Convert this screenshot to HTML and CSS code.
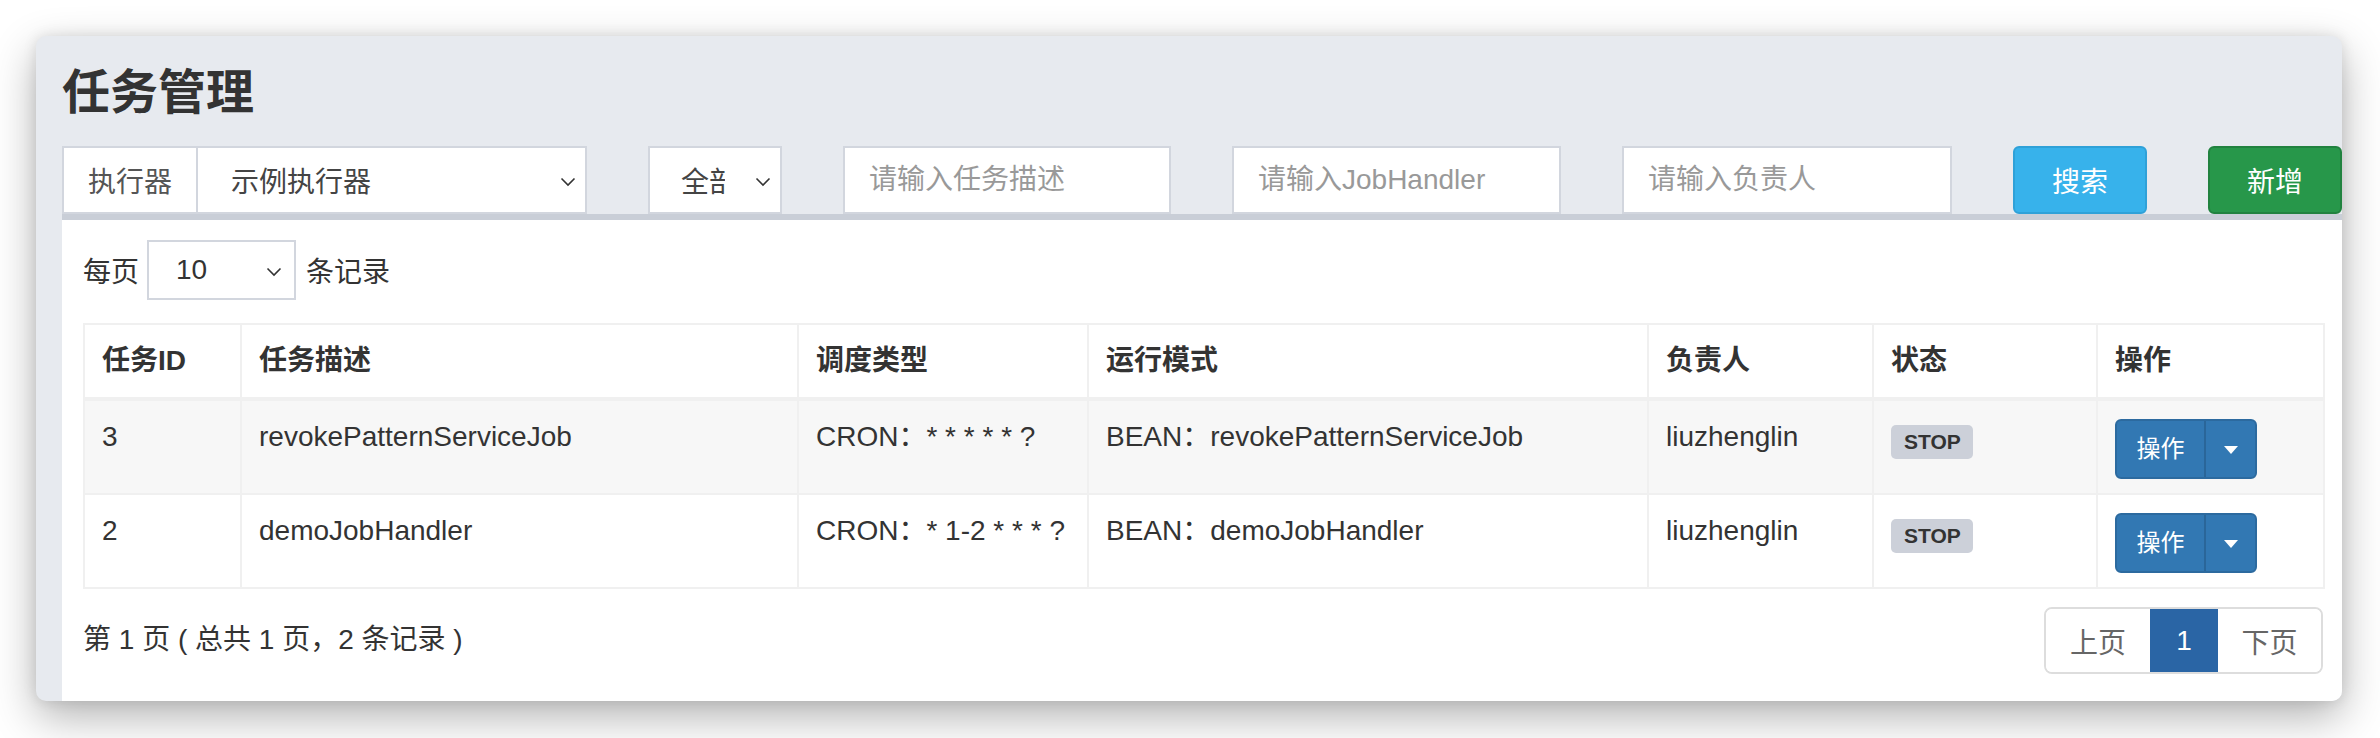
FILE: index.html
```html
<!DOCTYPE html>
<html lang="zh-CN">
<head>
<meta charset="utf-8">
<title>任务管理</title>
<link rel="stylesheet" href="styles.css">
</head>
<body>
<div class="window">
  <section class="content-header">
    <h1>任务管理</h1>
  </section>

  <div class="filters">
    <div class="input-group w-exec">
      <span class="addon">执行器</span>
      <div class="select grow">
        <span class="val">示例执行器</span>
        <svg class="chev" width="16" height="10" viewBox="0 0 16 10"><path d="M1.5 1.5 L8 8 L14.5 1.5" fill="none" stroke="#333" stroke-width="1.6"/></svg>
      </div>
    </div>
    <div class="select w-status">
      <span class="val clip">全部</span>
      <svg class="chev" width="16" height="10" viewBox="0 0 16 10"><path d="M1.5 1.5 L8 8 L14.5 1.5" fill="none" stroke="#333" stroke-width="1.6"/></svg>
    </div>
    <input class="input w-desc" type="text" placeholder="请输入任务描述">
    <input class="input w-handler" type="text" placeholder="请输入JobHandler">
    <input class="input w-author" type="text" placeholder="请输入负责人">
    <button class="btn btn-search" type="button">搜索</button>
    <button class="btn btn-add" type="button">新增</button>
  </div>

  <div class="box">
    <div class="length">
      <span>每页</span>
      <div class="select sm">
        <span class="val">10</span>
        <svg class="chev" width="16" height="10" viewBox="0 0 16 10"><path d="M1.5 1.5 L8 8 L14.5 1.5" fill="none" stroke="#333" stroke-width="1.6"/></svg>
      </div>
      <span>条记录</span>
    </div>

    <table class="grid">
      <colgroup>
        <col class="c1"><col class="c2"><col class="c3"><col class="c4"><col class="c5"><col class="c6"><col class="c7">
      </colgroup>
      <thead>
        <tr>
          <th>任务ID</th><th>任务描述</th><th>调度类型</th><th>运行模式</th><th>负责人</th><th>状态</th><th>操作</th>
        </tr>
      </thead>
      <tbody>
        <tr class="odd">
          <td>3</td>
          <td>revokePatternServiceJob</td>
          <td>CRON：* * * * * ?</td>
          <td>BEAN：revokePatternServiceJob</td>
          <td>liuzhenglin</td>
          <td><span class="label">STOP</span></td>
          <td><div class="btn-group"><span class="op">操作</span><span class="op-caret"><i class="caret"></i></span></div></td>
        </tr>
        <tr>
          <td>2</td>
          <td>demoJobHandler</td>
          <td>CRON：* 1-2 * * * ?</td>
          <td>BEAN：demoJobHandler</td>
          <td>liuzhenglin</td>
          <td><span class="label">STOP</span></td>
          <td><div class="btn-group"><span class="op">操作</span><span class="op-caret"><i class="caret"></i></span></div></td>
        </tr>
      </tbody>
    </table>

    <div class="footer">
      <div class="info">第 1 页 ( 总共 1 页，2 条记录 )</div>
      <ul class="pagination">
        <li class="pg prev">上页</li>
        <li class="pg active">1</li>
        <li class="pg next">下页</li>
      </ul>
    </div>
  </div>
</div>
</body>
</html>
```

FILE: styles.css
```css
* { box-sizing: border-box; }

html, body {
  margin: 0;
  padding: 0;
  background: #ffffff;
}

body {
  font-family: "Liberation Sans", "Noto Sans CJK SC", sans-serif;
  font-size: 28px;
  color: #333;
  height: 738px;
  overflow: hidden;
}

.window {
  margin: 36px 0 0 36px;
  width: 2306px;
  height: 665px;
  border-radius: 10px;
  background: #e7eaef;
  overflow: hidden;
  box-shadow: 0 16px 44px rgba(0, 0, 0, 0.30), 0 0 14px rgba(0, 0, 0, 0.10);
  padding-left: 26px;
}

.content-header {
  padding-top: 29px;
}

.content-header h1 {
  margin: 0;
  font-size: 48px;
  line-height: 56px;
  font-weight: bold;
  color: #333;
}

.filters {
  display: flex;
  gap: 61px;
  margin-top: 25px;
  height: 68px;
}

.input-group {
  display: flex;
  height: 68px;
}

.w-exec { width: 525px; flex: none; }
.w-status { width: 134px; flex: none; }
.w-desc { width: 328px; flex: none; }
.w-handler { width: 329px; flex: none; }
.w-author { width: 330px; flex: none; }

.addon {
  width: 134px;
  flex: none;
  display: flex;
  align-items: center;
  justify-content: center;
  background: #fff;
  border: 2px solid #d2d6de;
  border-right: none;
  color: #555;
}

.select {
  position: relative;
  display: flex;
  align-items: center;
  height: 68px;
  background: #fff;
  border: 2px solid #d2d6de;
  color: #444;
  padding-left: 33px;
}

.select.grow { flex: 1; }

.select .val {
  white-space: nowrap;
}

.select .val.clip {
  display: block;
  width: 44px;
  overflow: hidden;
}

.w-status { padding-left: 31px; }

.chev {
  position: absolute;
  right: 9px;
  top: 29px;
}

.input {
  height: 68px;
  border: 2px solid #d2d6de;
  background: #fff;
  padding: 0 24px;
  font-family: "Liberation Sans", "Noto Sans CJK SC", sans-serif;
  font-size: 28px;
  color: #555;
  border-radius: 0;
  outline: none;
}

.input::placeholder {
  color: #999;
}

.btn {
  width: 134px;
  flex: none;
  height: 68px;
  border-radius: 6px;
  border: 2px solid transparent;
  color: #fff;
  font-family: "Liberation Sans", "Noto Sans CJK SC", sans-serif;
  font-size: 28px;
  padding: 0;
}

.btn-search {
  background: #37b2eb;
  border-color: #2fa1d8;
}

.btn-add {
  background: #27974a;
  border-color: #21823f;
}

.box {
  width: 2282px;
  height: 500px;
  background: #fff;
  border-top: 6px solid #c9ced7;
  padding: 20px 21px 0 21px;
}

.length {
  display: flex;
  align-items: center;
  gap: 8px;
  height: 60px;
}

.select.sm {
  width: 149px;
  height: 60px;
  padding-left: 27px;
  color: #333;
  margin-right: 2px;
}

.select.sm .chev {
  top: 25px;
  right: 12px;
}

.grid {
  margin-top: 23px;
  width: 2240px;
  border-collapse: collapse;
  table-layout: fixed;
  border: 2px solid #f0f0f0;
}

.c1 { width: 157px; }
.c2 { width: 557px; }
.c3 { width: 290px; }
.c4 { width: 560px; }
.c5 { width: 225px; }
.c6 { width: 224px; }
.c7 { width: 227px; }

.grid th,
.grid td {
  border: 2px solid #f0f0f0;
  padding: 16px 16px 14px 17px;
  text-align: left;
  vertical-align: top;
  line-height: 40px;
  white-space: nowrap;
}

.grid th {
  font-weight: bold;
  color: #333;
  padding-bottom: 16px;
  border-bottom-width: 4px;
}

.grid td {
  color: #333;
}

.grid tr.odd td {
  background: #f7f7f7;
}

.label {
  display: inline-block;
  vertical-align: top;
  margin-top: 8px;
  background: #ccd0d9;
  color: #333;
  font-weight: bold;
  font-size: 21px;
  line-height: 21px;
  padding: 6px 12px 7px 13px;
  border-radius: 5px;
}

.btn-group {
  display: inline-flex;
  vertical-align: top;
  margin-top: 2px;
  height: 60px;
  border: 2px solid #2c6a9f;
  border-radius: 6px;
  background: #3278b3;
  overflow: hidden;
  color: #fff;
}

.op {
  width: 89px;
  display: flex;
  align-items: center;
  justify-content: center;
  font-size: 24px;
  border-right: 2px solid #2a6699;
}

.op-caret {
  width: 49px;
  display: flex;
  align-items: center;
  justify-content: center;
}

.caret {
  display: block;
  width: 0;
  height: 0;
  border-top: 8px solid #fff;
  border-left: 7px solid transparent;
  border-right: 7px solid transparent;
  margin-top: 2px;
}

.footer {
  display: flex;
  justify-content: space-between;
  align-items: center;
  margin-top: 18px;
}

.info {
  color: #333;
  padding-bottom: 8px;
}

.pagination {
  list-style: none;
  margin: 0;
  padding: 0;
  display: flex;
  height: 67px;
  border: 2px solid #dddddd;
  border-radius: 8px;
  overflow: hidden;
}

.pg {
  display: flex;
  align-items: center;
  justify-content: center;
  color: #666;
  background: #fff;
}

.pg.prev { width: 104px; }
.pg.next { width: 103px; }

.pg.active {
  width: 68px;
  background: #2a65a5;
  color: #fff;
  margin: -2px 0;
  height: 67px;
}
```
